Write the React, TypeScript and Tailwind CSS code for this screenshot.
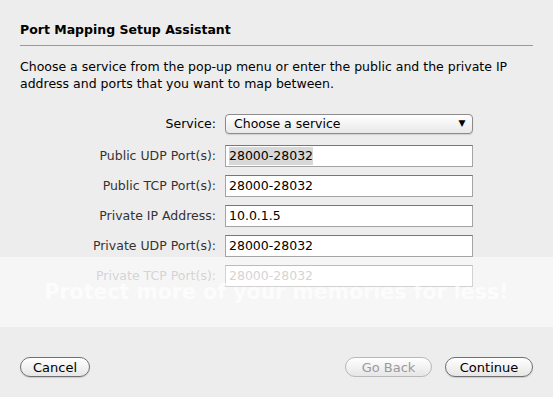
import React from "react";

const fields = [
  { label: "Public UDP Port(s):", value: "28000-28032", selected: true },
  { label: "Public TCP Port(s):", value: "28000-28032" },
  { label: "Private IP Address:", value: "10.0.1.5" },
  { label: "Private UDP Port(s):", value: "28000-28032" },
  { label: "Private TCP Port(s):", value: "28000-28032" },
];

function PillButton({ label, width, disabled }: { label: string; width: string; disabled?: boolean }) {
  return (
    <button
      className={
        width +
        " h-[20px] rounded-full border bg-gradient-to-b from-white to-[#e6e6e6] text-[13px] leading-none " +
        (disabled
          ? "border-[#b8b8b8] text-[#9a9a9a]"
          : "border-[#707070] text-black shadow-[0_1px_1px_rgba(0,0,0,0.15)]")
      }
    >
      {label}
    </button>
  );
}

export default function App() {
  return (
    <div className="relative h-[397px] w-[553px] overflow-hidden bg-[#ededed] font-['DejaVu_Sans',sans-serif] text-[12.5px] text-black">
      <div className="flex h-full flex-col px-5 pt-[22px]">
        <h1 className="text-[12.5px] font-bold leading-[16px]">Port Mapping Setup Assistant</h1>
        <div className="mt-[7px] h-px w-full bg-[#9a9a9a]" />
        <p className="mt-[12px] leading-[17px]">
          Choose a service from the pop-up menu or enter the public and the private IP address and ports that you want to map between.
        </p>

        <div className="mt-[22px] flex flex-col gap-[8px]">
          <div className="flex items-center">
            <span className="w-[205px] pr-[9px] text-right">Service:</span>
            <div className="flex h-[20px] w-[248px] items-center justify-between rounded-[4px] border border-[#8c8c8c] bg-gradient-to-b from-white to-[#e8e8e8] pl-2 shadow-[0_1px_1px_rgba(0,0,0,0.12)]">
              <span>Choose a service</span>
              <span className="flex h-full w-[20px] items-center justify-center text-[9px]">▼</span>
            </div>
          </div>
          {fields.map((f, i) => (
            <div key={f.label} className={"flex items-center " + (i === 0 ? "mt-[3px]" : "")}>
              <span className={"w-[205px] pr-[9px] text-right " + (i === 4 ? "text-[#a8a8a8]" : "text-[#333]")}>
                {f.label}
              </span>
              <div className="flex h-[22px] w-[248px] items-center border border-[#a4a4a4] border-t-[#777] bg-white px-[3px]">
                <span className={f.selected ? "bg-[#d8d8d8]" : i === 4 ? "text-[#a8a8a8]" : ""}>{f.value}</span>
              </div>
            </div>
          ))}
        </div>

        <div className="mt-auto mb-[20px] flex items-center">
          <PillButton label="Cancel" width="w-[70px]" />
          <div className="ml-auto flex gap-[13px]">
            <PillButton label="Go Back" width="w-[87px]" disabled />
            <PillButton label="Continue" width="w-[88px]" />
          </div>
        </div>
      </div>

      {/* photo host watermark band over the content */}
      <div className="pointer-events-none absolute left-0 top-[257px] flex h-[70px] w-full items-center justify-center bg-white/50">
        <span className="text-[20.5px] font-bold text-white/70">
          Protect more of your memories for less!
        </span>
      </div>
    </div>
  );
}
